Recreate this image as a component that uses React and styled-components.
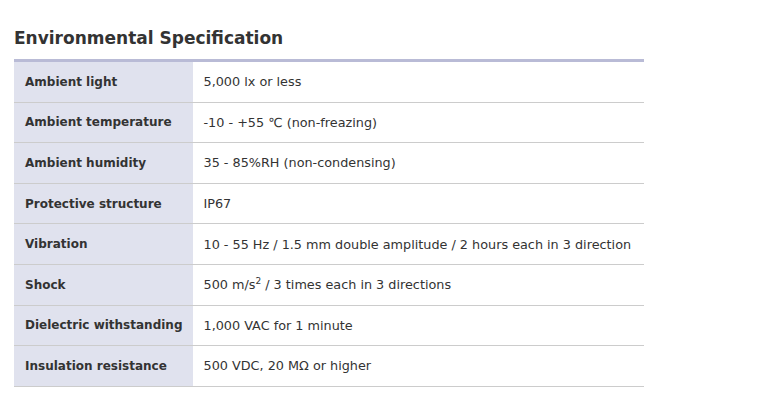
import React from 'react';
import styled, { createGlobalStyle } from 'styled-components';

const GlobalStyle = createGlobalStyle`
  body {
    margin: 0;
    background: #ffffff;
    font-family: "DejaVu Sans", Verdana, sans-serif;
    color: #333333;
  }
`;

const specs = [
  { label: 'Ambient light', value: '5,000 lx or less' },
  { label: 'Ambient temperature', value: '-10 - +55 ℃ (non-freazing)' },
  { label: 'Ambient humidity', value: '35 - 85%RH (non-condensing)' },
  { label: 'Protective structure', value: 'IP67' },
  { label: 'Vibration', value: '10 - 55 Hz / 1.5 mm double amplitude / 2 hours each in 3 direction' },
  {
    label: 'Shock',
    value: (
      <>
        500 m/s<sup>2</sup> / 3 times each in 3 directions
      </>
    ),
  },
  { label: 'Dielectric withstanding', value: '1,000 VAC for 1 minute' },
  { label: 'Insulation resistance', value: '500 VDC, 20 MΩ or higher' },
];

const Section = styled.section`
  padding: 26px 0 0 14px;
  width: 630px;
`;

const Title = styled.h2`
  margin: 0 0 9px;
  font-size: 17px;
  line-height: 24px;
  font-weight: bold;
  color: #333;
`;

const Table = styled.table`
  width: 100%;
  border-collapse: collapse;
  border-top: 3px solid #b9bbd6;
`;

const Row = styled.tr`
  border-bottom: 1px solid #cccccc;
`;

const Label = styled.th`
  width: 157px;
  height: 39.6px;
  padding: 0 11px;
  background: #e0e2ee;
  text-align: left;
  font-size: 12px;
  font-weight: bold;
  white-space: nowrap;
`;

const Value = styled.td`
  padding: 0 10px;
  height: 39.6px;
  font-size: 12.8px;
  white-space: nowrap;

  sup {
    font-size: 9px;
    line-height: 0;
  }
`;

export default function App() {
  return (
    <>
      <GlobalStyle />
      <Section>
        <Title>Environmental Specification</Title>
        <Table>
          <tbody>
            {specs.map((s) => (
              <Row key={s.label}>
                <Label>{s.label}</Label>
                <Value>{s.value}</Value>
              </Row>
            ))}
          </tbody>
        </Table>
      </Section>
    </>
  );
}
